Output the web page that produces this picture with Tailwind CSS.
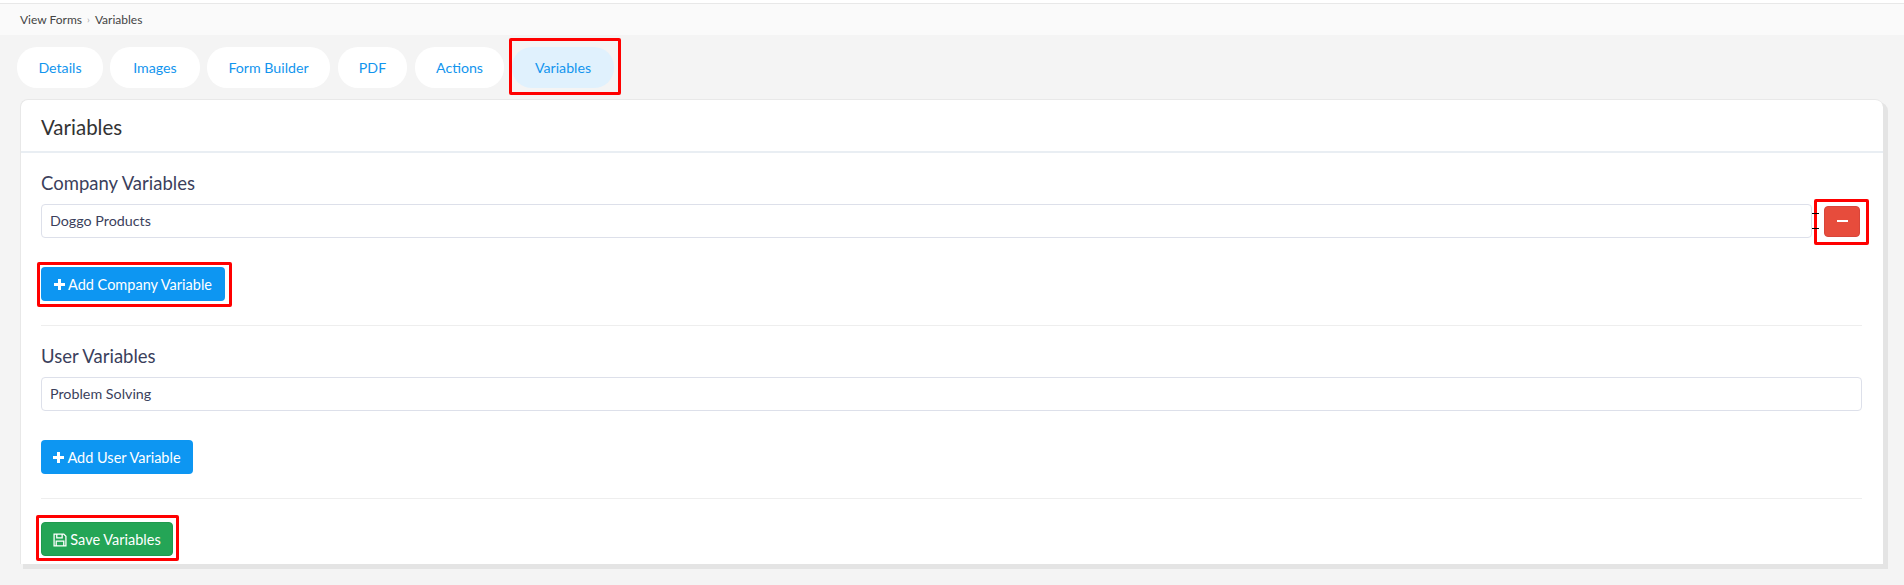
<!DOCTYPE html>
<html><head><meta charset="utf-8"><script src="https://cdn.jsdelivr.net/npm/@tailwindcss/browser@4"></script></head>
<body class="bg-[#f4f4f4] font-['Lato','Noto_Sans',sans-serif] text-[#3b3f5c] h-[585px] overflow-hidden">
<div class="h-[4px] bg-white border-b border-[#e8e8e8]"></div>
<div class="h-[31px] bg-[#fafafa] flex items-center pl-[20px] gap-[5px] text-[12px] text-[#444]"><span>View Forms</span><span class="text-[#aaa] text-[10px]">›</span><span>Variables</span></div>
<nav class="flex gap-[7px] pl-[17px] pt-[12px] h-[64px] text-[14.2px] text-[#1295ee]">
<a class="h-[41px] w-[86px] rounded-[20px] bg-white flex items-center justify-center">Details</a>
<a class="h-[41px] w-[90px] rounded-[20px] bg-white flex items-center justify-center">Images</a>
<a class="h-[41px] w-[123px] rounded-[20px] bg-white flex items-center justify-center">Form Builder</a>
<a class="h-[41px] w-[69px] ml-[1px] rounded-[20px] bg-white flex items-center justify-center">PDF</a>
<a class="h-[41px] w-[89px] ml-[1px] rounded-[20px] bg-white flex items-center justify-center">Actions</a>
<div class="relative ml-[1px]"><a class="h-[41px] w-[102px] rounded-[20px] bg-[#e0f1fd] flex items-center justify-center">Variables</a><div class="absolute left-[-3px] top-[-9px] w-[112px] h-[57px] border-[3px] border-[#f00] rounded-[2px]"></div></div>
</nav>
<main class="ml-[20px] w-[1863px] h-[465px] bg-white rounded-t-[8px] border-l border-t border-[#e8e8e8] shadow-[4px_4px_0_1px_#e4e4e4]">
<header class="h-[53px] border-b-2 border-[#e9eef3] pl-[20px] pt-[3px] flex items-center text-[20.5px] text-[#333]">Variables</header>
<div class="pl-[20px] pr-[21px]">
<h3 class="text-[18.5px] leading-[22px] pt-[19px] mb-[10px]">Company Variables</h3>
<div class="flex items-center">
<div class="h-[34px] grow border border-[#dde0ea] rounded-[4px] px-[8px] flex items-center text-[14.3px]">Doggo Products</div>
<div class="relative ml-[12px] mr-[2px]">
<button class="w-[36px] h-[31px] rounded-[4px] bg-[#e74c3c] border border-[#d8453a] flex items-center justify-center"><span class="block w-[11px] h-[2px] bg-white"></span></button>
<div class="absolute left-[-10px] top-[-7px] w-[55px] h-[46px] border-[3px] border-[#f00] rounded-[2px]"></div>
<div class="absolute left-[-12px] top-[7px] w-[7px] h-[1px] bg-black"></div>
<div class="absolute left-[-12px] top-[22px] w-[7px] h-[1px] bg-black"></div>
</div>
</div>
<div class="relative w-[184px] mt-[29px]">
<button class="w-[184px] h-[34px] pt-[1px] rounded-[4px] bg-[#0d96f2] text-white text-[14.5px] flex items-center justify-center gap-[3px]"><svg width="11" height="11" viewBox="0 0 11 11"><path d="M4 0h3v4h4v3H7v4H4V7H0V4h4z" fill="#fff"/></svg>Add Company Variable</button>
<div class="absolute left-[-4px] top-[-5px] w-[195px] h-[45px] border-[3px] border-[#f00] rounded-[2px]"></div>
</div>
<div class="border-t border-[#eeeeee] mt-[24px]"></div>
<h3 class="text-[18.5px] leading-[22px] pt-[19px] mb-[10px]">User Variables</h3>
<div class="h-[34px] border border-[#dde0ea] rounded-[4px] px-[8px] flex items-center text-[14.3px]">Problem Solving</div>
<button class="mt-[29px] w-[152px] h-[34px] pt-[1px] rounded-[4px] bg-[#0d96f2] text-white text-[14.5px] flex items-center justify-center gap-[3px]"><svg width="11" height="11" viewBox="0 0 11 11"><path d="M4 0h3v4h4v3H7v4H4V7H0V4h4z" fill="#fff"/></svg>Add User Variable</button>
<div class="border-t border-[#eeeeee] mt-[24px]"></div>
<div class="relative w-[132px] mt-[23px]">
<button class="w-[132px] h-[34px] pt-[1px] rounded-[4px] bg-[#24a556] border border-[#1f9a4e] text-white text-[14.5px] flex items-center justify-center gap-[3px]"><svg width="14" height="14" viewBox="0 0 13 13" fill="none" stroke="#fff" stroke-width="1.2"><path d="M1 1h9l2 2v9H1zM3.5 1v3.5h5V1M3 12V7.5h7V12"/></svg>Save Variables</button>
<div class="absolute left-[-5px] top-[-7px] w-[143px] h-[46px] border-[3px] border-[#f00] rounded-[2px]"></div>
</div>
</div>
</main>
</body></html>
